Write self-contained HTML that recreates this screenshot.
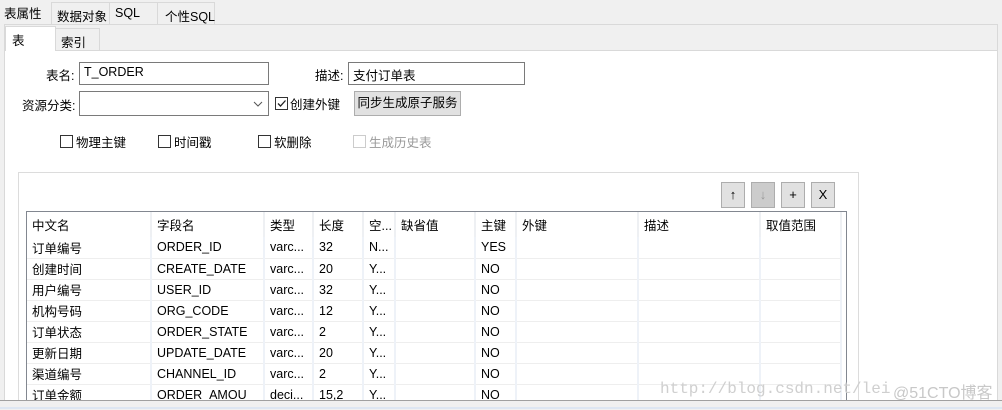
<!DOCTYPE html>
<html><head><meta charset="utf-8"><style>
*{box-sizing:border-box;margin:0;padding:0}
body{width:1002px;height:410px;background:#f0f0f0;position:relative;overflow:hidden;font-family:"Liberation Sans","Noto Sans CJK SC",sans-serif;font-size:12px;color:#000}
.a{position:absolute}
.tab{position:absolute;border:1px solid #d9d9d9;border-bottom:none;background:#f0f0f0;padding-top:3px;padding-left:5px;font-size:12.5px;white-space:nowrap}
.inp{position:absolute;background:#fff;border:1px solid #7a7a7a;padding:2px 4px;font-size:12.5px}
.cb{position:absolute;width:13px;height:13px;border:1px solid #333;background:#fff}
.lbl{position:absolute;font-size:12.5px;white-space:nowrap}
.btn{position:absolute;width:24px;height:26px;border:1px solid #adadad;background:#e1e1e1;text-align:center;line-height:24px;font-size:13px}
table{border-collapse:collapse;table-layout:fixed;font-size:12.5px}
td{height:21px;border-right:2px solid #eef2f8;border-bottom:1px solid #eeeeee;padding-left:5px;white-space:nowrap;overflow:hidden;vertical-align:middle}
tr.h td{height:25px;border-bottom:none;border-right:2px solid #eef0f3}
</style></head><body>
<div class="tab" style="left:0;top:0;width:52px;height:25px;border:none;padding-left:4px">表属性</div>
<div class="tab" style="left:51px;top:2px;width:59px;height:22px">数据对象</div>
<div class="tab" style="left:109px;top:2px;width:49px;height:22px">SQL</div>
<div class="tab" style="left:157px;top:2px;width:58px;height:22px;padding-left:7px">个性SQL</div>
<div class="a" style="left:4px;top:24px;width:994px;height:377px;border:1px solid #d9d9d9;background:#f0f0f0"></div>
<div class="a" style="left:5px;top:50px;width:992px;height:350px;background:#fff;border-top:1px solid #d9d9d9"></div>
<div class="tab" style="left:5px;top:26px;width:51px;height:25px;background:#fff;padding-left:6px">表</div>
<div class="tab" style="left:55px;top:28px;width:45px;height:22px">索引</div>

<div class="lbl" style="left:46px;top:65px">表名:</div>
<div class="inp" style="left:79px;top:62px;width:190px;height:23px">T_ORDER</div>
<div class="lbl" style="left:315px;top:65px">描述:</div>
<div class="inp" style="left:348px;top:62px;width:177px;height:23px">支付订单表</div>
<div class="lbl" style="left:22px;top:95px">资源分类:</div>
<div class="inp" style="left:79px;top:91px;width:190px;height:25px"><svg width="10" height="6" style="position:absolute;right:5px;top:9px"><path d="M1 1 L5 5 L9 1" stroke="#555" fill="none"/></svg></div>
<div class="cb" style="left:275px;top:97px"><svg width="11" height="11" style="position:absolute;left:0;top:0"><path d="M2 5.5 L4.5 8 L9.5 2.5" stroke="#222" stroke-width="1.3" fill="none"/></svg></div>
<div class="lbl" style="left:290px;top:94px">创建外键</div>
<div class="a" style="left:354px;top:91px;width:107px;height:25px;border:1px solid #adadad;background:#e1e1e1;font-size:12.5px;text-align:center;line-height:23px">同步生成原子服务</div>

<div class="cb" style="left:60px;top:135px"></div><div class="lbl" style="left:76px;top:132px">物理主键</div>
<div class="cb" style="left:158px;top:135px"></div><div class="lbl" style="left:174px;top:132px">时间戳</div>
<div class="cb" style="left:258px;top:135px"></div><div class="lbl" style="left:274px;top:132px">软删除</div>
<div class="cb" style="left:353px;top:135px;border-color:#ccc"></div><div class="lbl" style="left:369px;top:132px;color:#999">生成历史表</div>

<div class="a" style="left:18px;top:172px;width:841px;height:232px;border:1px solid #dcdcdc;background:#fff"></div>
<div class="btn" style="left:721px;top:182px">&#8593;</div>
<div class="btn" style="left:751px;top:182px;background:#cccccc;color:#999">&#8595;</div>
<div class="btn" style="left:781px;top:182px">+</div>
<div class="btn" style="left:811px;top:182px">X</div>

<div class="a" style="left:26px;top:211px;width:821px;height:195px;border:1px solid #828790;border-bottom:none;overflow:hidden;background:#fff">
<table style="width:814px">
<colgroup><col style="width:124px"><col style="width:113px"><col style="width:49px"><col style="width:50px"><col style="width:32px"><col style="width:80px"><col style="width:41px"><col style="width:122px"><col style="width:122px"><col style="width:81px"></colgroup>
<tr class="h"><td>中文名</td><td>字段名</td><td>类型</td><td>长度</td><td>空...</td><td>缺省值</td><td>主键</td><td>外键</td><td>描述</td><td>取值范围</td></tr>
<tr><td>订单编号</td><td>ORDER_ID</td><td>varc...</td><td>32</td><td>N...</td><td></td><td>YES</td><td></td><td></td><td></td></tr>
<tr><td>创建时间</td><td>CREATE_DATE</td><td>varc...</td><td>20</td><td>Y...</td><td></td><td>NO</td><td></td><td></td><td></td></tr>
<tr><td>用户编号</td><td>USER_ID</td><td>varc...</td><td>32</td><td>Y...</td><td></td><td>NO</td><td></td><td></td><td></td></tr>
<tr><td>机构号码</td><td>ORG_CODE</td><td>varc...</td><td>12</td><td>Y...</td><td></td><td>NO</td><td></td><td></td><td></td></tr>
<tr><td>订单状态</td><td>ORDER_STATE</td><td>varc...</td><td>2</td><td>Y...</td><td></td><td>NO</td><td></td><td></td><td></td></tr>
<tr><td>更新日期</td><td>UPDATE_DATE</td><td>varc...</td><td>20</td><td>Y...</td><td></td><td>NO</td><td></td><td></td><td></td></tr>
<tr><td>渠道编号</td><td>CHANNEL_ID</td><td>varc...</td><td>2</td><td>Y...</td><td></td><td>NO</td><td></td><td></td><td></td></tr>
<tr><td>订单金额</td><td>ORDER_AMOU</td><td>deci...</td><td>15,2</td><td>Y...</td><td></td><td>NO</td><td></td><td></td><td></td></tr>
</table></div>
<div class="a" style="left:0;top:400px;width:1002px;height:10px;background:#f0f0f0;border-top:1px solid #a0a0a0"></div>
<div class="a" style="left:0;top:407px;width:1002px;height:2px;background:#dde6f2"></div>
<div class="a" style="left:660px;top:380px;font-family:'Liberation Mono',monospace;font-size:16px;color:#cfcfcf;white-space:nowrap">http://blog.csdn.net/lei</div>
<div class="a" style="left:893px;top:379px;font-size:16px;color:#c8c8c8;white-space:nowrap">@51CTO博客</div>
</body></html>
